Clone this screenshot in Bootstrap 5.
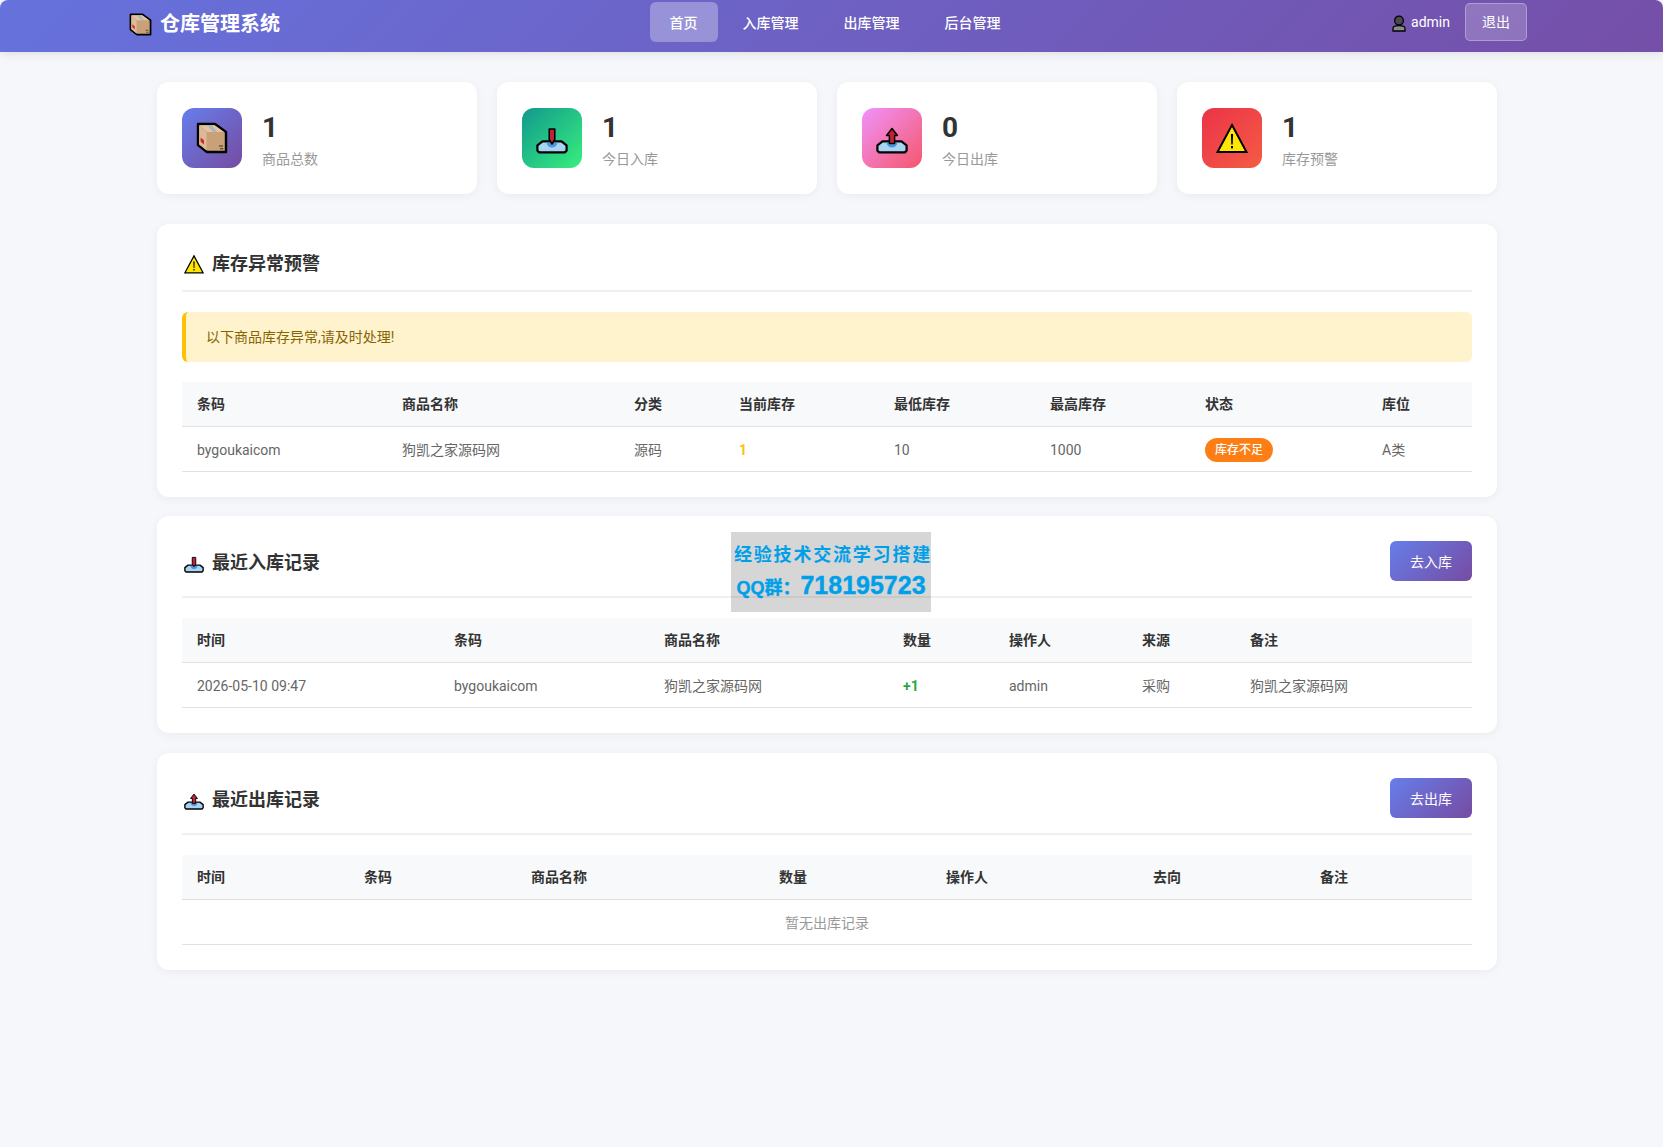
<!DOCTYPE html>
<html lang="zh-CN">
<head>
    <meta charset="UTF-8">
    <title>仓库管理系统</title>
    <link href="https://cdn.jsdelivr.net/npm/bootstrap@5.3.3/dist/css/bootstrap.min.css" rel="stylesheet">
    <style>
        body {
            position: relative;
            min-height: 1147px;
            background: #f5f7fa;
            color: #333;
            font-family: Roboto, "Noto Sans CJK SC", sans-serif;
            font-size: 14px;
            line-height: 1.4;
        }
        .top-bar {
            height: 52px;
            padding: 0;
            align-items: flex-start;
            flex-wrap: nowrap;
            background: linear-gradient(135deg, #6672dd 0%, #754fa8 100%);
            border-radius: 8px 8px 0 0;
            box-shadow: 0 2px 10px rgba(0, 0, 0, .1);
            --bs-navbar-nav-link-padding-x: 20px;
        }
        .top-inner {
            width: 1400px;
            height: 44px;
            margin-left: 127px;
        }
        .brand-line {
            gap: 8px;
            padding: 0 0 0 2px;
            margin: 4px 0 0;
            color: #fff;
            font-size: 20px;
            font-weight: 700;
        }
        .top-bar .nav-link {
            padding-top: 11.5px;
            padding-bottom: 8.5px;
            border-radius: 6px;
            color: #fff;
            font-weight: 500;
            font-size: 14px;
        }
        .top-bar .nav-link.active {
            background: rgba(255, 255, 255, .3);
            color: #fff;
        }
        .nav-gap { gap: 5px; margin-right: 2px; }
        .user-box { gap: 15px; color: #fff; }
        .user-name { gap: 5px; padding-top: 2px; }
        .logout-btn {
            padding: 9px 16px 7px;
            border: 1px solid rgba(255, 255, 255, .3);
            border-radius: 5px;
            background: rgba(255, 255, 255, .2);
            color: #fff;
            font-size: 14px;
            line-height: 1.4;
        }
        .page-main {
            width: 1400px;
            margin-left: 127px;
            padding: 30px 30px 0;
        }
        .stat-row { --bs-gutter-x: 20px; margin-bottom: 30px; }
        .stat-box {
            gap: 20px;
            height: 112px;
            padding: 25px;
            border: 0;
            border-radius: 12px;
            background: #fff;
            box-shadow: 0 2px 10px rgba(0, 0, 0, .05);
        }
        .stat-icon {
            width: 60px;
            height: 60px;
            border-radius: 12px;
        }
        .tone-a { background: linear-gradient(135deg, #667eea, #764ba2); }
        .tone-b { background: linear-gradient(135deg, #11998e, #38ef7d); }
        .tone-c { background: linear-gradient(135deg, #f093fb, #f5576c); }
        .tone-d { background: linear-gradient(135deg, #eb3349, #f45c43); }
        .stat-num { padding-top: 1px; font-size: 28px; font-weight: 700; color: #333; margin-bottom: 3px; }
        .stat-label { color: #999; }
        .block-box {
            margin-bottom: 19.5px;
            padding: 25px;
            border: 0;
            border-radius: 12px;
            background: #fff;
            box-shadow: 0 2px 10px rgba(0, 0, 0, .05);
        }
        .block-head {
            margin-bottom: 20px;
            padding-bottom: 13px;
            border-bottom: 2px solid #f0f0f0;
        }
        .head-btn { padding-bottom: 15px; }
        .block-title {
            gap: 8px;
            margin: 0;
            padding: 2px 0 0 2px;
            font-size: 18px;
            line-height: 26px;
            font-weight: 700;
            color: #333;
        }
        .head-btn .block-title { padding-top: 4px; }
        .go-btn {
            height: 40px;
            padding: 11px 20px 9px;
            border: 0;
            border-radius: 6px;
            background: linear-gradient(135deg, #667eea, #764ba2);
            color: #fff;
            font-size: 14px;
            line-height: 20px;
        }
        .warn-note {
            margin-bottom: 20px;
            padding: 16px 20px 14px;
            border: 0;
            border-left: 4px solid #ffc107;
            border-radius: 6px;
            background: #fff3cd;
            color: #856404;
            font-size: 14px;
        }
        .data-table { table-layout: fixed; margin: 0; width: 1290px; color: #666; font-size: 14px; line-height: 20px; }
        .data-table > :not(caption) > * > * {
            padding: 12px 15px;
            border-bottom: 1px solid #e0e0e0;
            color: #666;
        }
        .data-table > tbody > tr > td { padding: 13px 15px 11px; }
        .data-table > thead > tr > th {
            background: #f8f9fa;
            color: #333;
            font-weight: 700;
        }
        .cols-a col:nth-child(1) { width: 205px; }
        .cols-a col:nth-child(2) { width: 232px; }
        .cols-a col:nth-child(3) { width: 105px; }
        .cols-a col:nth-child(4) { width: 155px; }
        .cols-a col:nth-child(5) { width: 156px; }
        .cols-a col:nth-child(6) { width: 155px; }
        .cols-a col:nth-child(7) { width: 177px; }
        .cols-a col:nth-child(8) { width: 105px; }
        .cols-b col:nth-child(1) { width: 257px; }
        .cols-b col:nth-child(2) { width: 210px; }
        .cols-b col:nth-child(3) { width: 239px; }
        .cols-b col:nth-child(4) { width: 106px; }
        .cols-b col:nth-child(5) { width: 133px; }
        .cols-b col:nth-child(6) { width: 108px; }
        .cols-b col:nth-child(7) { width: 237px; }
        .cols-c col:nth-child(1) { width: 167px; }
        .cols-c col:nth-child(2) { width: 167px; }
        .cols-c col:nth-child(3) { width: 248px; }
        .cols-c col:nth-child(4) { width: 167px; }
        .cols-c col:nth-child(5) { width: 207px; }
        .cols-c col:nth-child(6) { width: 167px; }
        .cols-c col:nth-child(7) { width: 167px; }
        .data-table td.qty-low { color: #ffc107; font-weight: 700; }
        .data-table td.qty-add { color: #28a745; font-weight: 700; }
        .data-table td.empty-cell { color: #999; text-align: center; }
        .low-tag {
            display: inline-block;
            margin: -4px 0 -2px;
            padding: 4px 10px;
            border-radius: 12px;
            background: #fd7e14;
            color: #fff;
            font-size: 12px;
            font-weight: 500;
            line-height: 16px;
            vertical-align: middle;
        }
        .water-mark {
            position: absolute;
            left: 731px;
            top: 532px;
            width: 200px;
            height: 80px;
            background: rgba(0, 0, 0, .16);
            color: #00a0e9;
            text-align: center;
            white-space: nowrap;
        }
        .water-top {
            margin-top: 11px;
            padding-left: 3px;
            font-size: 18px;
            font-weight: 700;
            line-height: 24px;
            letter-spacing: 1.8px;
        }
        .water-qq {
            margin-top: 4px;
            font-family: "Liberation Sans", "Noto Sans CJK SC", sans-serif;
            font-weight: 700;
            font-size: 18px;
            line-height: 28px;
            -webkit-text-stroke: .4px #00a0e9;
        }
        .water-qq b { font-size: 25px; }
    </style>
</head>
<body>
<svg width="0" height="0" class="position-absolute">
    <defs>
        <symbol id="ico-box" viewBox="0 0 32 32">
            <path d="M2 2H19L30 10V30H11L2 23Z" fill="#c9a077" stroke="#000" stroke-width="2.4" stroke-linejoin="round"/>
            <path d="M3.2 3.2H18.6L28 10H11Z" fill="#e2c3a2"/>
            <path d="M3.2 3.6L10.6 10.4V28.6L3.2 22.5Z" fill="#dcb999"/>
            <path d="M11 3.2H15.6L21 10H17Z" fill="#a9b6bd"/>
            <path d="M4.6 15.5L8 18.3V22.6L4.6 19.8Z" fill="#d8262c"/>
            <path d="M23 24H27M24 26.8H27.4" stroke="#333" stroke-width="1"/>
        </symbol>
        <symbol id="ico-in" viewBox="0 0 32 32">
            <path d="M6.5 19.4H25.5L30.6 23.4V28.6L28.8 30.4H3.2L1.4 28.6V23.4Z" fill="#a8d4f2" stroke="#000" stroke-width="2.2" stroke-linejoin="round"/>
            <path d="M10.5 20.6H21.5C21 24 18.8 25.6 16 25.6S11 24 10.5 20.6Z" fill="#4d96d9"/>
            <path d="M13.2 7H18.8V17.5L16 22L13.2 17.5Z" fill="#c4203c" stroke="#000" stroke-width="1.5" stroke-linejoin="round"/>
        </symbol>
        <symbol id="ico-out" viewBox="0 0 32 32">
            <path d="M6.5 19.4H25.5L30.6 23.4V28.6L28.8 30.4H3.2L1.4 28.6V23.4Z" fill="#a8d4f2" stroke="#000" stroke-width="2.2" stroke-linejoin="round"/>
            <path d="M10.5 20.6H21.5C21 24 18.8 25.6 16 25.6S11 24 10.5 20.6Z" fill="#4d96d9"/>
            <path d="M16 6.5L21.5 13.5H18.6V21.5H13.4V13.5H10.5Z" fill="#c4203c" stroke="#000" stroke-width="1.5" stroke-linejoin="round"/>
        </symbol>
        <symbol id="ico-warn" viewBox="0 0 32 32">
            <path d="M16 3L30.5 30H1.5Z" fill="#ffe600" stroke="#000" stroke-width="2" stroke-linejoin="miter"/>
            <path d="M14.9 12H17.1L16.7 22.5H15.3Z" fill="#000"/>
            <rect x="15" y="24" width="2" height="2.4" fill="#000"/>
        </symbol>
        <symbol id="ico-user" viewBox="0 0 14 17">
            <path d="M1 16V13.2C1 11.4 3 10.6 7 10.6S13 11.4 13 13.2V16Z" fill="#8a8a8e" stroke="#000" stroke-width="1.3"/>
            <circle cx="7" cy="5.6" r="4.4" fill="#4a4a4e" stroke="#000" stroke-width="1.3"/>
        </symbol>
    </defs>
</svg>

<nav class="navbar navbar-expand top-bar">
    <div class="top-inner d-flex justify-content-between align-items-center">
        <div class="brand-line d-flex align-items-center">
            <svg width="23" height="23"><use href="#ico-box"/></svg>
            <span>仓库管理系统</span>
        </div>
        <ul class="navbar-nav nav-gap">
            <li class="nav-item"><a class="nav-link active" href="#">首页</a></li>
            <li class="nav-item"><a class="nav-link" href="#">入库管理</a></li>
            <li class="nav-item"><a class="nav-link" href="#">出库管理</a></li>
            <li class="nav-item"><a class="nav-link" href="#">后台管理</a></li>
        </ul>
        <div class="user-box d-flex align-items-center">
            <span class="user-name d-flex align-items-center">
                <svg width="14" height="17"><use href="#ico-user"/></svg>
                admin
            </span>
            <a class="btn logout-btn" href="#">退出</a>
        </div>
    </div>
</nav>

<main class="page-main">
    <div class="row stat-row">
        <div class="col-3">
            <div class="card stat-box flex-row align-items-center">
                <div class="stat-icon tone-a d-flex align-items-center justify-content-center">
                    <svg width="32" height="32"><use href="#ico-box"/></svg>
                </div>
                <div>
                    <div class="stat-num">1</div>
                    <div class="stat-label">商品总数</div>
                </div>
            </div>
        </div>
        <div class="col-3">
            <div class="card stat-box flex-row align-items-center">
                <div class="stat-icon tone-b d-flex align-items-center justify-content-center">
                    <svg width="32" height="32"><use href="#ico-in"/></svg>
                </div>
                <div>
                    <div class="stat-num">1</div>
                    <div class="stat-label">今日入库</div>
                </div>
            </div>
        </div>
        <div class="col-3">
            <div class="card stat-box flex-row align-items-center">
                <div class="stat-icon tone-c d-flex align-items-center justify-content-center">
                    <svg width="32" height="32"><use href="#ico-out"/></svg>
                </div>
                <div>
                    <div class="stat-num">0</div>
                    <div class="stat-label">今日出库</div>
                </div>
            </div>
        </div>
        <div class="col-3">
            <div class="card stat-box flex-row align-items-center">
                <div class="stat-icon tone-d d-flex align-items-center justify-content-center">
                    <svg width="32" height="32"><use href="#ico-warn"/></svg>
                </div>
                <div>
                    <div class="stat-num">1</div>
                    <div class="stat-label">库存预警</div>
                </div>
            </div>
        </div>
    </div>

    <section class="card block-box">
        <div class="block-head">
            <h3 class="block-title d-flex align-items-center">
                <svg width="20" height="20"><use href="#ico-warn"/></svg>
                库存异常预警
            </h3>
        </div>
        <div class="alert warn-note" role="alert">以下商品库存异常,请及时处理!</div>
        <table class="table data-table cols-a">
            <colgroup><col><col><col><col><col><col><col><col></colgroup>
            <thead>
                <tr><th>条码</th><th>商品名称</th><th>分类</th><th>当前库存</th><th>最低库存</th><th>最高库存</th><th>状态</th><th>库位</th></tr>
            </thead>
            <tbody>
                <tr>
                    <td>bygoukaicom</td><td>狗凯之家源码网</td><td>源码</td><td class="qty-low">1</td><td>10</td><td>1000</td>
                    <td><span class="badge low-tag">库存不足</span></td><td>A类</td>
                </tr>
            </tbody>
        </table>
    </section>

    <section class="card block-box">
        <div class="block-head head-btn d-flex justify-content-between align-items-center">
            <h3 class="block-title d-flex align-items-center">
                <svg width="20" height="20"><use href="#ico-in"/></svg>
                最近入库记录
            </h3>
            <a class="btn go-btn" href="#">去入库</a>
        </div>
        <table class="table data-table cols-b">
            <colgroup><col><col><col><col><col><col><col></colgroup>
            <thead>
                <tr><th>时间</th><th>条码</th><th>商品名称</th><th>数量</th><th>操作人</th><th>来源</th><th>备注</th></tr>
            </thead>
            <tbody>
                <tr>
                    <td>2026-05-10 09:47</td><td>bygoukaicom</td><td>狗凯之家源码网</td><td class="qty-add">+1</td><td>admin</td><td>采购</td><td>狗凯之家源码网</td>
                </tr>
            </tbody>
        </table>
    </section>

    <section class="card block-box">
        <div class="block-head head-btn d-flex justify-content-between align-items-center">
            <h3 class="block-title d-flex align-items-center">
                <svg width="20" height="20"><use href="#ico-out"/></svg>
                最近出库记录
            </h3>
            <a class="btn go-btn" href="#">去出库</a>
        </div>
        <table class="table data-table cols-c">
            <colgroup><col><col><col><col><col><col><col></colgroup>
            <thead>
                <tr><th>时间</th><th>条码</th><th>商品名称</th><th>数量</th><th>操作人</th><th>去向</th><th>备注</th></tr>
            </thead>
            <tbody>
                <tr><td colspan="7" class="empty-cell">暂无出库记录</td></tr>
            </tbody>
        </table>
    </section>
</main>

<div class="water-mark">
    <div class="water-top">经验技术交流学习搭建</div>
    <div class="water-qq">QQ群：<b>718195723</b></div>
</div>

<script src="https://cdn.jsdelivr.net/npm/bootstrap@5.3.3/dist/js/bootstrap.bundle.min.js"></script>
</body>
</html>
